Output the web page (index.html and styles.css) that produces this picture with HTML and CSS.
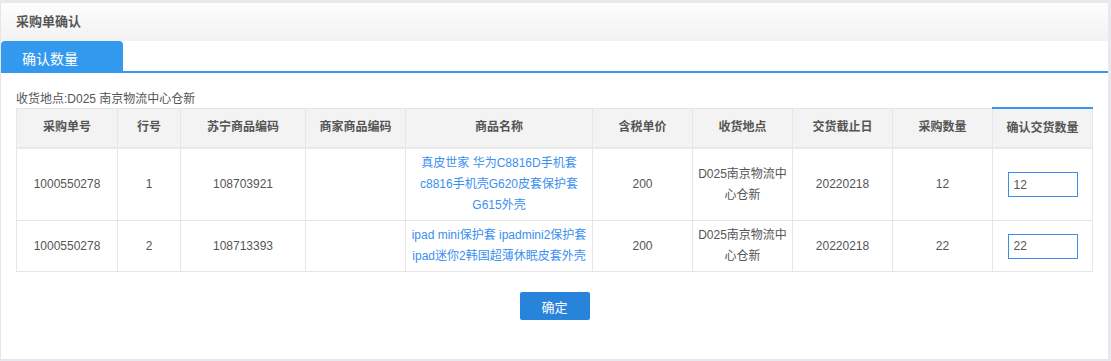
FILE: index.html
```html
<!DOCTYPE html>
<html lang="zh-CN">

<head>
    <meta charset="UTF-8">
    <title>采购单确认</title>
    <link rel="stylesheet" href="styles.css">
</head>

<body>
    <div class="panel">
        <div class="panel-head">采购单确认</div>
        <div class="tabs">
            <span class="tab active">确认数量</span>
        </div>
        <div class="panel-body">
            <p class="addr">收货地点:D025 南京物流中心仓新</p>
            <table class="grid">
                <colgroup>
                    <col style="width: 101px">
                    <col style="width: 63px">
                    <col style="width: 125px">
                    <col style="width: 100px">
                    <col style="width: 187px">
                    <col style="width: 100px">
                    <col style="width: 100px">
                    <col style="width: 100px">
                    <col style="width: 100px">
                    <col style="width: 100px">
                </colgroup>
                <thead>
                    <tr>
                        <th>采购单号</th>
                        <th>行号</th>
                        <th>苏宁商品编码</th>
                        <th>商家商品编码</th>
                        <th>商品名称</th>
                        <th>含税单价</th>
                        <th>收货地点</th>
                        <th>交货截止日</th>
                        <th>采购数量</th>
                        <th class="current">确认交货数量</th>
                    </tr>
                </thead>
                <tbody>
                    <tr>
                        <td>1000550278</td>
                        <td>1</td>
                        <td>108703921</td>
                        <td></td>
                        <td class="name"><a href="#">真皮世家 华为C8816D手机套<br>c8816手机壳G620皮套保护套<br>G615外壳</a></td>
                        <td>200</td>
                        <td>D025南京物流中<br>心仓新</td>
                        <td>20220218</td>
                        <td>12</td>
                        <td class="qty"><input type="text" value="12"></td>
                    </tr>
                    <tr>
                        <td>1000550278</td>
                        <td>2</td>
                        <td>108713393</td>
                        <td></td>
                        <td class="name"><a href="#">ipad mini保护套 ipadmini2保护套<br>ipad迷你2韩国超薄休眠皮套外壳</a></td>
                        <td>200</td>
                        <td>D025南京物流中<br>心仓新</td>
                        <td>20220218</td>
                        <td>22</td>
                        <td class="qty"><input type="text" value="22"></td>
                    </tr>
                </tbody>
            </table>
            <div class="actions">
                <button id="confirmBtn">确定</button>
            </div>
        </div>
    </div>
</body>

</html>
```

FILE: styles.css
```css
* {
    margin: 0;
    padding: 0;
    box-sizing: border-box;
}

body {
    font-family: "Liberation Sans", "Noto Sans CJK SC", sans-serif;
    font-size: 12px;
    color: #555;
    background-color: #e8e8ed;
    padding: 3px 3px 0 0;
    height: 361px;
    overflow: hidden;
}

.panel {
    background-color: #fff;
    border-left: 1px solid #e6e6e6;
    border-bottom: 1px solid #e6e6e6;
    height: 357px;
}

.panel-head {
    height: 38px;
    line-height: 38px;
    padding-left: 15px;
    font-size: 13px;
    font-weight: bold;
    color: #555;
    background: linear-gradient(to bottom, #fdfdfd, #f2f2f2);
}

.tabs {
    height: 32px;
    border-bottom: 2px solid #3399ee;
    display: flex;
    align-items: flex-end;
}

.tab {
    width: 122px;
    height: 30px;
    line-height: 36px;
    padding-left: 21px;
    font-size: 14px;
    color: #fff;
    background-color: #3399ee;
    border-radius: 4px 4px 0 0;
}

.panel-body {
    padding: 18px 15px 0 15px;
}

.addr {
    line-height: 16px;
}

.grid {
    border-collapse: collapse;
    table-layout: fixed;
    width: 1076px;
}

.grid th,
.grid td {
    border: 1px solid #e6e6e6;
    text-align: center;
    line-height: 21px;
}

.grid th {
    background-color: #f3f3f3;
    height: 40px;
    font-weight: bold;
    border-bottom: 2px solid #e9e9e9;
}

.grid th.current {
    border-top: 2px solid #3399ee;
}

.grid td {
    padding: 4px 2px;
}

.grid td.name a {
    color: #3b8ff0;
    text-decoration: none;
}

.grid td.qty input {
    width: 70px;
    height: 25px;
    border: 1px solid #3a8ee6;
    padding-left: 5px;
    font-family: inherit;
    font-size: 12px;
    color: #555;
    outline: none;
}

.actions {
    display: flex;
    justify-content: center;
    padding-top: 20px;
}

button {
    width: 70px;
    height: 28px;
    font-family: inherit;
    font-size: 13px;
    color: #fff;
    background-color: #2884db;
    border: none;
    border-radius: 2px;
    cursor: pointer;
}
```
